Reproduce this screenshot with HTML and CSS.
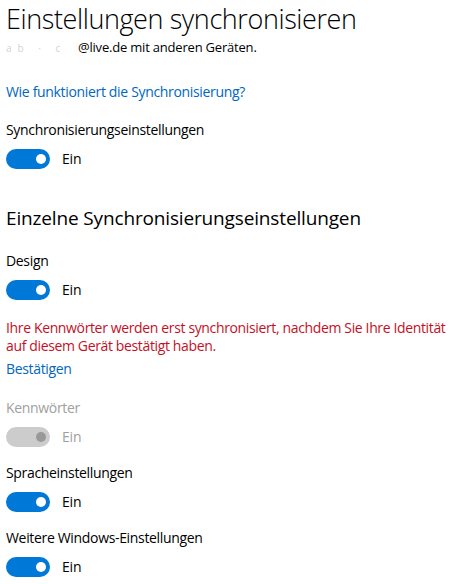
FILE: index.html
```html
<!DOCTYPE html>
<html>
<head><meta charset="utf-8"><link rel="stylesheet" href="styles.css"></head>
<body>
<div class="page">
  <h1 class="title">Einstellungen synchronisieren</h1>
  <p class="sub"><span class="blur">ab  ·  c</span>@live.de mit anderen Geräten.</p>
  <a class="link first-link">Wie funktioniert die Synchronisierung?</a>
  <div class="setting">
    <div class="label">Synchronisierungseinstellungen</div>
    <div class="toggle-row"><span class="toggle on"><span class="knob"></span></span><span class="state">Ein</span></div>
  </div>
  <h2 class="heading">Einzelne Synchronisierungseinstellungen</h2>
  <div class="setting after-heading">
    <div class="label">Design</div>
    <div class="toggle-row"><span class="toggle on"><span class="knob"></span></span><span class="state">Ein</span></div>
  </div>
  <p class="warn">Ihre Kennwörter werden erst synchronisiert, nachdem Sie Ihre Identität auf diesem Gerät bestätigt haben.</p>
  <a class="link confirm">Bestätigen</a>
  <div class="setting disabled">
    <div class="label">Kennwörter</div>
    <div class="toggle-row"><span class="toggle off"><span class="knob"></span></span><span class="state">Ein</span></div>
  </div>
  <div class="setting next">
    <div class="label">Spracheinstellungen</div>
    <div class="toggle-row"><span class="toggle on"><span class="knob"></span></span><span class="state">Ein</span></div>
  </div>
  <div class="setting next">
    <div class="label">Weitere Windows-Einstellungen</div>
    <div class="toggle-row"><span class="toggle on"><span class="knob"></span></span><span class="state">Ein</span></div>
  </div>
</div>
</body>
</html>
```
FILE: styles.css
```css
html, body { margin: 0; padding: 0; background: #fff; }
body { font-family: "Open Sans", "Noto Sans", sans-serif; color: #000; font-size: 14px; }
.page { padding: 0 0 0 6px; width: 460px; }
.title { font-weight: 300; font-size: 27px; margin: 0; line-height: 36px; padding-top: 1px; letter-spacing: -0.4px; }
.sub { margin: 0; line-height: 20px; font-size: 13px; letter-spacing: -0.2px; }
.blur { color: #d4d4d4; font-size: 10px; display: inline-block; width: 72px; letter-spacing: 6px; }
.link { display: block; color: #0067c0; line-height: 20px; letter-spacing: -0.33px; }
.first-link { margin-top: 24px; }
.setting { display: flex; flex-direction: column; margin-top: 18px; }
.setting.after-heading { margin-top: 20px; }
.setting.next { margin-top: 16px; }
.label { line-height: 20px; letter-spacing: -0.33px; }
.toggle-row { display: flex; align-items: center; gap: 12px; margin-top: 9px; height: 20px; }
.toggle { width: 44px; height: 20px; border-radius: 10px; display: flex; align-items: center; justify-content: flex-end; box-sizing: border-box; padding-right: 4px; }
.toggle.on { background: #0078d7; }
.toggle .knob { width: 10px; height: 10px; border-radius: 50%; background: #fff; }
.toggle.off { background: #cccccc; }
.toggle.off .knob { background: #999; }
.state { line-height: 20px; letter-spacing: -0.2px; }
.heading { font-weight: 400; font-size: 19px; margin: 36px 0 0 0; line-height: 26px; letter-spacing: -0.15px; }
.warn { color: #c50f1f; margin: 19px 0 0 0; line-height: 18px; width: 455px; letter-spacing: -0.36px; }
.confirm { margin-top: 4px; }
.disabled .label, .disabled .state { color: #a0a0a0; }
.disabled { margin-top: 19px; }
```
